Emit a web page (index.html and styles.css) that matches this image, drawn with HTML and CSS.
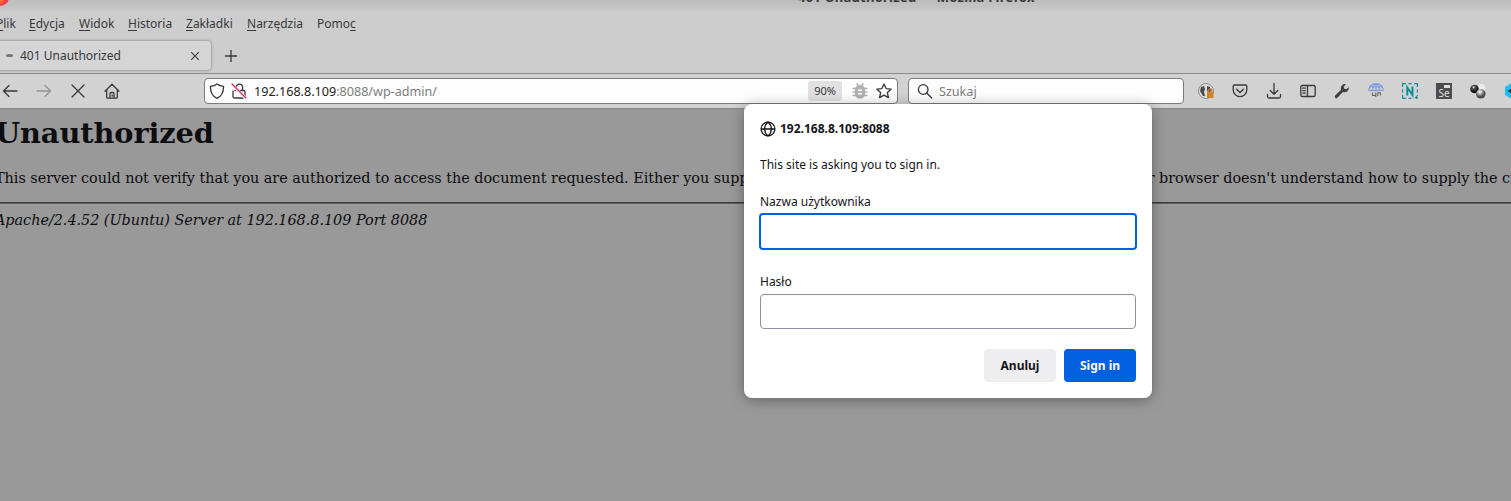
FILE: index.html
```html
<!DOCTYPE html>
<html lang="pl">
<head>
<meta charset="utf-8">
<title>401 Unauthorized</title>
<link rel="stylesheet" href="styles.css">
</head>
<body>
<div class="window">
  <header class="titlebar">
    <span class="app-logo"></span>
    <span class="window-title">401 Unauthorized — Mozilla Firefox</span>
  </header>
  <nav class="menubar">
    <span><u>P</u>lik</span><span><u>E</u>dycja</span><span><u>W</u>idok</span><span><u>H</u>istoria</span><span><u>Z</u>akładki</span><span><u>N</u>arzędzia</span><span>Pomo<u>c</u></span>
  </nav>
  <div class="tabs">
    <div class="tab">
      <span class="loading"></span>
      <span class="tab-label">401 Unauthorized</span>
      <svg class="tab-close" viewBox="0 0 10 10"><path d="M1.2 1.2l7.6 7.6M8.8 1.2L1.2 8.8" fill="none" stroke="#3c3c3e" stroke-width="1.1"/></svg>
    </div>
    <svg class="new-tab" viewBox="0 0 12 12"><path d="M6 0v12M0 6h12" fill="none" stroke="#38383a" stroke-width="1.3"/></svg>
  </div>
  <div class="toolbar">
    <div class="nav-buttons">
      <svg class="icon" viewBox="0 0 16 16"><path d="M7 2.5L1.5 8 7 13.500M1.500 8H15"/></svg>
      <svg class="icon faded" viewBox="0 0 16 16"><path d="M9 2.500L14.500 8 9 13.500M14.500 8H1"/></svg>
      <svg class="icon" viewBox="0 0 16 16"><path d="M2 2l12 12M14 2L2 14"/></svg>
      <svg class="icon" viewBox="0 0 16 16"><path d="M1 8.300L8 1.200l7 7.100M2.700 7v7.300q0 .9.900.9h8.800q.9 0 .9-.9V7M6 15v-4.200q0-1.300 1.300-1.300h1.400q1.300 0 1.300 1.300V15M8.200 12.200v.8"/></svg>
    </div>
    <div class="field urlbar">
      <svg class="icon" viewBox="0 0 16 16"><path d="M8 .9C6.300 2.200 4 3 1.400 3.300c0 5.700 1.800 10 6.600 12 4.800-2 6.600-6.300 6.600-12C12 3 9.700 2.200 8 .9z"/></svg>
      <svg class="icon lock" viewBox="0 0 16 16"><path d="M5 7V4.500a3.300 3.300 0 016.600 0V7M4 7.500h8.500q1.500 0 1.500 1.500v4.500q0 1.500-1.500 1.500h-9Q2 15 2 13.500V8"/><path class="halo" d="M1 1.500l14 14"/><path class="slash" d="M1 1l13.700 13.700"/></svg>
      <span class="address">192.168.8.109<span class="dim">:8088/wp-admin/</span></span>
      <span class="zoom-level">90%</span>
      <svg class="bug" viewBox="0 0 16 16"><path d="M4.500 .5l2 2M11.500 .5l-2 2M.5 5.500h15M.5 9h15M.5 12.500h15" stroke="#b0b0b0" stroke-width="1.700" fill="none"/><path d="M8 2c3.200 0 5 2 5 5v3.500c0 3-2 5-5 5s-5-2-5-5V7c0-3 1.800-5 5-5z" fill="#b0b0b0"/><path d="M6 7.200h4M6 10.800h4" stroke="#fafafa" stroke-width="1.500"/></svg>
      <svg class="icon" viewBox="0 0 16 16"><path d="M8 1l2.100 4.600 5 .6-3.700 3.400 1 5L8 12.100l-4.400 2.500 1-5L.9 6.200l5-.6z"/></svg>
    </div>
    <div class="field search">
      <svg class="icon" viewBox="0 0 16 16"><circle cx="6.200" cy="6.500" r="4.800"/><path d="M9.700 10l5 5"/></svg>
      <span class="dim">Szukaj</span>
    </div>
    <div class="extensions">
      <svg viewBox="0 0 16 16"><circle cx="8" cy="8" r="7.500" fill="#ddd" stroke="#77777a" stroke-width=".8"/><path d="M3 4l3-1 1 3-1 3 1 4-2 0-3-5zM9 3l3 1 1 4-3 2-1-3z" fill="#4b4b4d"/><path d="M10.500 9V7.500a1.700 1.700 0 013.400 0V9" fill="none" stroke="#c77a1b" stroke-width="1.200"/><path d="M9 8.800h6.500V15H9z" fill="#d18323"/></svg>
      <svg class="icon" viewBox="0 0 16 16"><path d="M2.500 2h11q1.300 0 1.300 1.300v3.500a6.800 6.800 0 01-13.600 0V3.300Q1.200 2 2.500 2zM4.600 6.200L8 9.500l3.400-3.300"/></svg>
      <svg class="icon" viewBox="0 0 16 16"><path d="M8 .5v10.800M4.200 7.500L8 11.300l3.800-3.800M1.500 11.500v2q0 1.500 1.500 1.500h10q1.500 0 1.500-1.500v-2"/></svg>
      <svg class="icon" viewBox="0 0 16 16"><rect x=".8" y="2.500" width="14.400" height="11" rx="1.500"/><path d="M7.500 2.500v11M2.800 5.200h2.500M2.800 7.700h2.500M2.800 10.200h2.500"/></svg>
      <svg viewBox="0 0 16 16"><path d="M1.200 14.800q-1-1.200 0-2.200l5.600-5.500Q6 4 8 2.200 9.700.8 12 1.200L9.700 3.700l.5 2.100 2.100.5 2.500-2.300q.4 2.400-1.200 4-1.900 1.800-4.700 1l-5.600 5.800q-1.100 1-2.100 0z" fill="#3e3e40"/></svg>
      <svg viewBox="0 0 16 16"><path d="M.7 7.500a7.300 7 0 0114.600 0M8 .5v8M1.800 4h12.400M.7 7.500h14.600M4.500 7.500C4.500 4 6 1.500 8 .5c2 1 3.500 3.500 3.500 7" fill="none" stroke="#7c99e3" stroke-width="1.200"/><path d="M4.500 9.500v3h3.300M7.800 9.500v4.500M9.800 13V9.800h2.700V12.500" fill="none" stroke="#666" stroke-width="1.100"/></svg>
      <svg viewBox="0 0 16 16"><path d="M.6 4V.6H4M6.500.6h3M12 .6h3.400V4M15.400 6.500v3M15.400 12v1M.6 6.500v3M.6 12v3.400H4M6.500 15.400h3M13 14.600h3M14.500 13v3" fill="none" stroke="#168e99" stroke-width="1.200"/><path d="M5.300 12.500V4.500l5.200 7.500V3.500" fill="none" stroke="#128d99" stroke-width="2"/></svg>
      <span class="selenium">Se<i></i></span>
      <svg viewBox="0 0 16 16"><defs><radialGradient id="dark" cx=".4" cy=".3"><stop stop-color="#eee"/><stop offset=".35" stop-color="#555"/><stop offset="1" stop-color="#161616"/></radialGradient><radialGradient id="grey" cx=".4" cy=".3"><stop stop-color="#fff"/><stop offset=".5" stop-color="#aaa"/><stop offset="1" stop-color="#4b4b4b"/></radialGradient></defs><circle cx="11.500" cy="5" r="4" fill="#ededed"/><circle cx="4.500" cy="6" r="4.300" fill="url(#dark)"/><circle cx="10.800" cy="10.800" r="4.800" fill="url(#grey)"/></svg>
      <svg viewBox="0 0 16 16"><path d="M1 4l7-4 7 4v8l-7 4-7-4z" fill="#1fbdf0"/><path d="M3.500 8L8 5v6z" fill="#333"/></svg>
    </div>
  </div>
  <main class="page">
    <h1>Unauthorized</h1>
    <p>This server could not verify that you are authorized to access the document requested. Either you supplied the wrong credentials (e.g., bad password), or your browser doesn't understand how to supply the credentials required.</p>
    <hr>
    <address>Apache/2.4.52 (Ubuntu) Server at 192.168.8.109 Port 8088</address>
  </main>
</div>
<form class="dialog">
  <div class="origin">
    <svg viewBox="0 0 16 16"><path d="M1 8h14M8 1c-2.300 2-3.400 4.300-3.400 7S5.700 13 8 15c2.300-2 3.400-4.300 3.400-7S10.300 3 8 1z"/><circle cx="8" cy="8" r="6.900"/></svg>
    <span>192.168.8.109:8088</span>
  </div>
  <div class="message">This site is asking you to sign in.</div>
  <label for="user">Nazwa użytkownika</label>
  <input id="user" class="focused" type="text">
  <label for="pass">Hasło</label>
  <input id="pass" type="password">
  <div class="actions">
    <button type="button">Anuluj</button>
    <button type="button" class="primary">Sign in</button>
  </div>
</form>
</body>
</html>
```
FILE: styles.css
```css
* { box-sizing: border-box; }
body {
  margin: 0;
  height: 501px;
  overflow: hidden;
  background: #99999a;
  font: 12px/16px "Noto Sans", sans-serif;
  color: #38383a;
}
svg { display: block; flex: none; overflow: visible; }
.window { width: 1511px; height: 501px; overflow: hidden; }

.titlebar {
  display: flex;
  align-items: flex-end;
  height: 10px;
  overflow: hidden;
  background: linear-gradient(#bcbcbc, #c6c6c6);
}
.app-logo {
  width: 18px;
  height: 18px;
  margin: 0 0 4px -9px;
  border-radius: 50%;
  background: radial-gradient(circle at 35% 45%, #ff8a2a 25%, #f9423c 60%, #d51d68);
}
.window-title {
  margin: 0 0 5px 789px;
  font-size: 13px;
  font-weight: 700;
  letter-spacing: .24px;
  white-space: nowrap;
}
.menubar {
  display: grid;
  grid-template-columns: 33px 50px 49px 58px 61px 70px 60px;
  align-items: center;
  height: 27px;
  background: #cdcdcd;
  text-indent: -4px;
}
.menubar u { text-underline-offset: 2px; }
.tabs {
  display: flex;
  align-items: center;
  height: 37px;
  padding-top: 1px;
  border-bottom: 1px solid #8c8c8c;
  background: #cdcdcd;
}
.tab {
  display: flex;
  align-items: center;
  width: 215px;
  height: 29px;
  margin-left: -4px;
  padding-left: 10px;
  border-radius: 4px;
  background: #d5d5d5;
  box-shadow: 0 0 3px rgba(0, 0, 0, .45);
}
.loading { width: 7px; height: 3px; border-radius: 50%; background: #747474; }
.tab-label { width: 170px; margin-left: 7px; }
.tab-close { width: 10px; height: 10px; }
.new-tab { width: 12px; height: 12px; margin-left: 14px; }

.toolbar {
  display: flex;
  align-items: center;
  height: 35px;
  border-bottom: 1px solid #858585;
  background: #d2d2d2;
}
.toolbar > * { flex: none; }
.icon {
  width: 16px;
  height: 16px;
  fill: none;
  stroke: #38383a;
  stroke-width: 1.3;
  stroke-linejoin: round;
  stroke-linecap: round;
}
.faded { stroke: #939393; }
.nav-buttons { display: flex; gap: 18px; width: 204px; padding-left: 2px; }
.field {
  display: flex;
  align-items: center;
  height: 26px;
  border: 1px solid #7b7b7b;
  border-radius: 4px;
  background: #fdfdfd;
  font-size: 12.6px;
}
.dim { color: #7e7e80; }
.urlbar { width: 694px; padding-left: 4px; }
.lock { margin-left: 6px; }
.lock .halo { stroke: #fdfdfd; stroke-width: 3; }
.lock .slash { stroke: #e72b56; stroke-width: 1.4; }
.address { flex: none; width: 554px; margin-left: 7px; padding-top: 2px; color: #1d1d20; }
.zoom-level {
  width: 34px;
  height: 20px;
  border-radius: 3px;
  background: #e1e1e1;
  font-size: 11px;
  line-height: 20px;
  text-align: center;
}
.bug { width: 16px; height: 16px; margin: 0 8px 0 10px; }
.search { width: 276px; margin-left: 10px; padding-left: 8px; }
.search .dim { margin-left: 6px; padding-top: 2px; }
.extensions { display: flex; gap: 18px; margin-left: 14px; }
.extensions svg { width: 16px; height: 16px; }
.selenium {
  position: relative;
  flex: none;
  width: 16px;
  height: 16px;
  background: #4b4b4c;
  color: #dedede;
  font-size: 10px;
  line-height: 20px;
  text-align: center;
}
.selenium i {
  position: absolute;
  top: 2px;
  right: 2px;
  width: 6px;
  height: 3px;
  background: #dedede;
}

.page {
  width: 2000px;
  height: 392px;
  margin-left: -5px;
  background: #99999a;
  color: #0d0d0f;
  font: 14.4px/17px "DejaVu Serif", serif;
  letter-spacing: -.025px;
}
.page h1 { margin: 0; padding-top: 7px; font-size: 28.8px; line-height: 34px; letter-spacing: -.1px; }
.page p { margin: 20px 0 15px; }
.page hr { height: 2px; margin: 0 0 8px; border: 0; border-top: 1px solid #39393a; background: #606061; }

.dialog {
  position: absolute;
  top: 104px;
  left: 744px;
  width: 408px;
  height: 294px;
  padding: 17px 16px 16px;
  border-radius: 8px;
  background: #fff;
  box-shadow: 0 2px 14px rgba(0, 0, 0, .35);
  color: #15141a;
}
.origin { display: flex; align-items: center; gap: 4px; font-weight: 700; }
.origin svg { width: 16px; height: 16px; fill: none; stroke: #15141a; stroke-width: 1.300; }
.message { margin: 20px 0 21px; }
.dialog label { display: block; }
.dialog input {
  display: block;
  width: 376px;
  height: 35px;
  margin: 4px 0 20px;
  border: 1px solid #8f8f9d;
  border-radius: 4px;
  outline: 0;
  background: #fff;
}
.dialog .focused {
  width: 378px;
  height: 37px;
  margin: 3px 0 24px -1px;
  border: 2px solid #0060df;
}
.actions { display: flex; justify-content: flex-end; gap: 8px; }
.actions button {
  width: 72px;
  height: 33px;
  padding: 0;
  border: 0;
  border-radius: 4px;
  background: #eeeef0;
  color: #15141a;
  font: 700 12px/16px "Noto Sans", sans-serif;
}
.actions .primary { background: #0060df; color: #fbfbfe; }
```
